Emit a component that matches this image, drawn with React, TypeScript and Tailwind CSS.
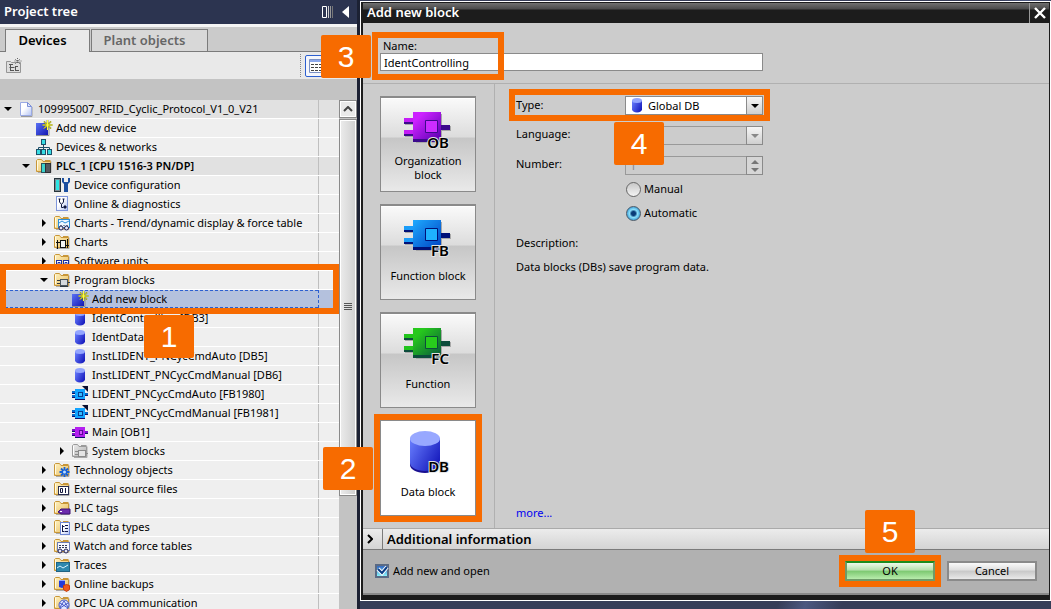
import type { ReactNode } from 'react';

type IconName =
  | 'page' | 'newItem' | 'network' | 'plc' | 'config' | 'diagnostics' | 'trend' | 'charts'
  | 'units' | 'blocks' | 'db' | 'fb' | 'ob' | 'system' | 'tech' | 'external' | 'tags'
  | 'types' | 'watch' | 'traces' | 'backups' | 'opc';

type TreeNode = {
  label: string;
  depth: number;
  icon: IconName;
  state?: 'open' | 'closed';
  header?: boolean;
  bold?: boolean;
  selected?: boolean;
};

const nodes: TreeNode[] = [
  { label: '109995007_RFID_Cyclic_Protocol_V1_0_V21', depth: 0, icon: 'page', state: 'open', header: true },
  { label: 'Add new device', depth: 1, icon: 'newItem' },
  { label: 'Devices & networks', depth: 1, icon: 'network' },
  { label: 'PLC_1 [CPU 1516-3 PN/DP]', depth: 1, icon: 'plc', state: 'open', header: true, bold: true },
  { label: 'Device configuration', depth: 2, icon: 'config' },
  { label: 'Online & diagnostics', depth: 2, icon: 'diagnostics' },
  { label: 'Charts - Trend/dynamic display & force table', depth: 2, icon: 'trend', state: 'closed' },
  { label: 'Charts', depth: 2, icon: 'charts', state: 'closed' },
  { label: 'Software units', depth: 2, icon: 'units', state: 'closed' },
  { label: 'Program blocks', depth: 2, icon: 'blocks', state: 'open' },
  { label: 'Add new block', depth: 3, icon: 'newItem', selected: true },
  { label: 'IdentControlling [DB3]', depth: 3, icon: 'db' },
  { label: 'IdentData [DB4]', depth: 3, icon: 'db' },
  { label: 'InstLIDENT_PNCycCmdAuto [DB5]', depth: 3, icon: 'db' },
  { label: 'InstLIDENT_PNCycCmdManual [DB6]', depth: 3, icon: 'db' },
  { label: 'LIDENT_PNCycCmdAuto [FB1980]', depth: 3, icon: 'fb' },
  { label: 'LIDENT_PNCycCmdManual [FB1981]', depth: 3, icon: 'fb' },
  { label: 'Main [OB1]', depth: 3, icon: 'ob' },
  { label: 'System blocks', depth: 3, icon: 'system', state: 'closed' },
  { label: 'Technology objects', depth: 2, icon: 'tech', state: 'closed' },
  { label: 'External source files', depth: 2, icon: 'external', state: 'closed' },
  { label: 'PLC tags', depth: 2, icon: 'tags', state: 'closed' },
  { label: 'PLC data types', depth: 2, icon: 'types', state: 'closed' },
  { label: 'Watch and force tables', depth: 2, icon: 'watch', state: 'closed' },
  { label: 'Traces', depth: 2, icon: 'traces', state: 'closed' },
  { label: 'Online backups', depth: 2, icon: 'backups', state: 'closed' },
  { label: 'OPC UA communication', depth: 2, icon: 'opc', state: 'closed' },
];

const indent = ['pl-0', 'pl-[18px]', 'pl-[36px]', 'pl-[54px]'];

function Gradients() {
  return (
    <svg className="absolute size-0" aria-hidden="true">
      <defs>
        <linearGradient id="folder" x1="0" y1="0" x2="1" y2="1">
          <stop offset="0" stopColor="#fff2c0" />
          <stop offset="1" stopColor="#e8bd62" />
        </linearGradient>
        <linearGradient id="grayFolder" x1="0" y1="0" x2="1" y2="1">
          <stop offset="0" stopColor="#ececec" />
          <stop offset="1" stopColor="#b0b0b0" />
        </linearGradient>
        <linearGradient id="blue" x1="0" y1="0" x2="1" y2="1">
          <stop offset="0" stopColor="#5a72f4" />
          <stop offset="1" stopColor="#1418b4" />
        </linearGradient>
        <linearGradient id="cylinder" x1="0" y1="0" x2="1" y2="0.6">
          <stop offset="0" stopColor="#6a80ff" />
          <stop offset="1" stopColor="#1a1fc0" />
        </linearGradient>
        <linearGradient id="paper" x1="0" y1="0" x2="1" y2="1">
          <stop offset="0.4" stopColor="#ffffff" />
          <stop offset="1" stopColor="#b4c4f4" />
        </linearGradient>
        <linearGradient id="purpleBlock" x1="0" y1="0" x2="1" y2="1">
          <stop offset="0.2" stopColor="#cc22ff" />
          <stop offset="1" stopColor="#5a00b0" />
        </linearGradient>
        <linearGradient id="blueBlock" x1="0" y1="0" x2="1" y2="1">
          <stop offset="0" stopColor="#1eaaff" />
          <stop offset="1" stopColor="#0044c4" />
        </linearGradient>
        <linearGradient id="greenBlock" x1="0" y1="0" x2="1" y2="1">
          <stop offset="0.2" stopColor="#26c81c" />
          <stop offset="1" stopColor="#0a5a3c" />
        </linearGradient>
      </defs>
    </svg>
  );
}

function Folder({ gray }: { gray?: boolean }) {
  return (
    <g>
      <path d="M2 14.5h13V3.5" fill="none" stroke="#a9a9a9" />
      <path
        d="M.5 13.5v-11l1-1h4l1.500 2h7.500v10z"
        fill={gray ? 'url(#grayFolder)' : 'url(#folder)'}
        stroke={gray ? '#9a9a9a' : '#c89638'}
      />
      <path d="M1.500 12V3" stroke={gray ? '#fff' : '#fffbe6'} />
      <path d="M9 2.500h5.500" stroke={gray ? '#9a9a9a' : '#c89638'} />
    </g>
  );
}

function Chip({ color, pin }: { color: string; pin: string }) {
  return (
    <g>
      <path d="M0 5h4v2H0zM0 9h4v2H0zM12 7h4v2h-4z" fill={pin} />
      <path d="M0 7.500h3M0 11.500h3M13 9.500h3" stroke="#10106c" />
      <path d="M3 3h10v10H3z" fill={color} />
      <path d="M3 13.500h10" stroke="#10106c" />
    </g>
  );
}

const drawings: Record<IconName, ReactNode> = {
  page: (
    <g>
      <path d="M3 15.500h11V6" fill="none" stroke="#9a9a9a" />
      <path d="M2.500 1.500h7l4 4v9h-11z" fill="url(#paper)" stroke="#9aaae4" />
      <path d="M9.500 1.500v4h4z" fill="#dfe6fc" stroke="#7c90d8" />
    </g>
  ),
  newItem: (
    <g>
      <path d="M0 3h12v12H0z" fill="url(#blue)" />
      <path d="M0 15.500h13V5" fill="none" stroke="#8f8f8f" />
      <path d="M11.500 0v10M6.500 5h10M8 1.500l7 7M15 1.500l-7 7" stroke="#6a6a18" strokeWidth="1.600" />
      <path d="M11.500 0v10M6.500 5h10M8 1.500l7 7M15 1.500l-7 7" stroke="#ffff3c" />
    </g>
  ),
  network: (
    <g fill="#38dce4" stroke="#1e5068">
      <path d="M7.500 6v3M2.500 10V8.500h11V10M7.500 8v2" fill="none" />
      <rect x="5.500" y=".5" width="4" height="5" />
      <rect x=".5" y="10.500" width="4" height="5" />
      <rect x="5.500" y="10.500" width="4" height="5" />
      <rect x="11.500" y="10.500" width="4" height="5" />
    </g>
  ),
  plc: (
    <g>
      <Folder />
      <rect x="5.500" y="5.500" width="4" height="9" fill="#3cd2cc" stroke="#2b5560" />
      <rect x="9.500" y="5.500" width="5" height="9" fill="#55595f" stroke="#2e3034" />
    </g>
  ),
  config: (
    <g>
      <rect x=".5" y="1.500" width="6" height="13" fill="#7c8890" stroke="#26343c" />
      <path d="M2 3h3v10H2z" fill="#2ce6e4" />
      <path d="M8 1v4l2 2v8h4V7l2-2V1h-2v4h-4V1z" fill="#1b4fa0" />
    </g>
  ),
  diagnostics: (
    <g>
      <rect x="2.500" y=".5" width="11" height="14" fill="url(#paper)" stroke="#7f96dc" />
      <path d="M5.500 3v3l2 2.500 2-2.500V3M7.500 8.500v3h2" fill="none" stroke="#101840" />
      <path d="M10 10h2v2h-2zM4.500 3h2M8.500 3h2" fill="#101840" stroke="#101840" />
    </g>
  ),
  trend: (
    <g>
      <Folder />
      <rect x="4.500" y="4.500" width="11" height="8" fill="#eef6ff" stroke="#2c8fd8" />
      <path d="M5 8l3-2 3 2 4-2" fill="none" stroke="#2c8fd8" />
      <path d="M6 10.500h8" stroke="#8090a0" strokeDasharray="2 1" />
      <circle cx="7" cy="13" r="2" fill="#e8e8f8" stroke="#202050" />
      <circle cx="12.500" cy="13" r="2" fill="#e8e8f8" stroke="#202050" />
    </g>
  ),
  charts: (
    <g>
      <Folder />
      <rect x="6.500" y="6.500" width="5" height="7" fill="#f4f4f4" stroke="#101010" />
      <path d="M2 8.500h4M3.500 6v9M12 11.500h3M13.500 5v9" fill="none" stroke="#101010" />
    </g>
  ),
  units: (
    <g>
      <Folder />
      <rect x="2.500" y="7.500" width="5" height="6" fill="#fff" stroke="#2030a0" />
      <rect x="9.500" y="7.500" width="5" height="6" fill="#fff" stroke="#2030a0" />
      <path d="M4 9.500h2v2H4zM11 9.500h2v2h-2z" fill="none" stroke="#2030a0" />
    </g>
  ),
  blocks: (
    <g>
      <Folder />
      <path d="M3 8.500h4M3 11.500h4M12 10.500h4" stroke="#2f3840" strokeWidth="1" />
      <rect x="6.500" y="7.500" width="7" height="6" fill="#d4d8dc" stroke="#4a545c" />
      <path d="M6 14.500h8" stroke="#2f3840" />
    </g>
  ),
  db: (
    <g>
      <path d="M3 3.500v9c0 1.500 2 3 5 3s5-1.500 5-3v-9z" fill="url(#cylinder)" />
      <ellipse cx="8" cy="3.500" rx="5" ry="2.500" fill="#93a5ff" />
    </g>
  ),
  fb: (
    <g>
      <Chip color="#12a4ff" pin="#0668c8" />
      <rect x="6.500" y="6.500" width="4" height="4" fill="#35bcff" stroke="#083c90" />
      <path d="M10 0h6v6z" fill="#0b0f30" />
    </g>
  ),
  ob: (
    <g>
      <Chip color="#b31ff0" pin="#7a10c8" />
      <rect x="7.500" y="6.500" width="3" height="4" fill="#d650ff" stroke="#5a0a98" />
    </g>
  ),
  system: (
    <g>
      <Folder gray />
      <path d="M3 8.500h4M3 11.500h4M12 10.500h4" stroke="#8a8a8a" />
      <rect x="6.500" y="7.500" width="7" height="6" fill="#e4e4e4" stroke="#8a8a8a" />
    </g>
  ),
  tech: (
    <g>
      <Folder />
      <path d="M10.500 5v10M5.500 10h10M7 6.500l7 7M14 6.500l-7 7" stroke="#1862d8" strokeWidth="1.800" />
      <circle cx="10.500" cy="10" r="1.500" fill="#bfe0ff" />
    </g>
  ),
  external: (
    <g>
      <Folder />
      <rect x="4.500" y="5.500" width="10" height="8" fill="#fff" stroke="#2a2e50" />
      <path d="M6.500 7.500h2v4h-2zM11.500 7v5" fill="none" stroke="#14183c" />
    </g>
  ),
  tags: (
    <g>
      <Folder />
      <path d="M4 12l3-3h9v5H7z" fill="#6d2cae" stroke="#3d1272" />
      <path d="M6 11.500h2" stroke="#fff" />
    </g>
  ),
  types: (
    <g>
      <Folder />
      <rect x="6.500" y="3.500" width="9" height="12" fill="url(#paper)" stroke="#6d86d4" />
      <path d="M8.500 6v7M8.500 7.500h2M8.500 12.500h2M11 6.500h3M11 9.500h3M11 12.500h3" stroke="#10184c" />
    </g>
  ),
  watch: (
    <g>
      <Folder />
      <rect x="3.500" y="4.500" width="12" height="8" fill="#f6f8ff" stroke="#6a7cb8" />
      <path d="M5 7.500h9M5 9.500h9" stroke="#303a58" strokeDasharray="2 1" />
      <circle cx="6" cy="13" r="2" fill="#e8e8f8" stroke="#202050" />
      <circle cx="12" cy="13" r="2" fill="#e8e8f8" stroke="#202050" />
    </g>
  ),
  traces: (
    <g>
      <Folder />
      <rect x="2.500" y="5.500" width="13" height="9" fill="#2d88ae" stroke="#1f6384" />
      <path d="M3 11l3-2 3 2 5-3" fill="none" stroke="#d6f2ff" />
    </g>
  ),
  backups: (
    <g>
      <Folder />
      <path d="M5 4h6v7l-3 1-3-1z" fill="#243cd8" />
      <path d="M5 4h6v1H5z" fill="#93a5ff" />
      <path d="M9.500 9.500l3-1 3 1v4l-3 2-3-2z" fill="#f05a1c" stroke="#c83c08" />
    </g>
  ),
  opc: (
    <g>
      <Folder />
      <circle cx="10" cy="10" r="5" fill="#dfe6ff" stroke="#4457c8" />
      <path d="M6 12l4-6 4 6M6 8l8 5M14 8l-8 5" fill="none" stroke="#4457c8" />
    </g>
  ),
};

function Icon({ name }: { name: IconName }) {
  return (
    <svg viewBox="0 0 16 16" className="size-4 shrink-0 overflow-visible" aria-hidden="true">
      {drawings[name]}
    </svg>
  );
}

// Orange frame with its step number, laid over the control it points to
function Callout({ step, frame, badge }: { step: number; frame: string; badge: string }) {
  return (
    <div className={`pointer-events-none absolute z-10 border-6 border-[#f76b00] ${frame}`}>
      <span
        className={`absolute flex h-[43px] w-[50px] items-center justify-center rounded-xs bg-[#f76b00] font-['Liberation_Sans',sans-serif] text-[30px] leading-none text-white ${badge}`}
      >
        {step}
      </span>
    </div>
  );
}

function Arrow({ node }: { node: TreeNode }) {
  if (!node.state) return <span className="w-4 shrink-0" />;
  return (
    <button type="button" aria-label={`Toggle ${node.label}`} className="flex w-4 shrink-0 items-center justify-center">
      <svg viewBox="0 0 8 8" className="size-2" aria-hidden="true">
        <path d={node.state === 'open' ? 'M0 2h8l-4 4z' : 'M2 0l4 4-4 4z'} />
      </svg>
    </button>
  );
}

function TreeRow({ node }: { node: TreeNode }) {
  const color = node.selected ? 'bg-[#b4c1dd]' : node.header ? 'bg-[#e1e1e1]' : 'bg-[#efefef]';
  return (
    <li className={`relative flex h-[19px] border-b border-white ${color}`}>
      <div
        className={`flex min-w-0 flex-1 items-center ${indent[node.depth]} ${
          node.selected ? 'border-y border-dashed border-[#2c5fd0]' : ''
        }`}
      >
        <Arrow node={node} />
        <span className="ml-0.5 mr-1 flex">
          <Icon name={node.icon} />
        </span>
        <span className={`whitespace-nowrap ${node.bold ? 'font-semibold' : ''}`}>{node.label}</span>
      </div>
      <div className={`w-[21px] border-l ${node.selected ? 'border-dashed border-[#2c5fd0]' : 'border-[#bfbfbf]'}`} />
      {node.selected && <Callout step={1} frame="inset-x-0 -top-[26px] h-[50px]" badge="left-[138px] top-[45px]" />}
    </li>
  );
}

function ProjectTree() {
  return (
    <aside className="flex w-[357px] shrink-0 flex-col bg-[#c3c3c3]">
      <header className="flex h-6 shrink-0 items-center bg-[#2c3450] pl-1 pr-[7px] text-white">
        <h2 className="flex-1 text-[13px] font-semibold">Project tree</h2>
        <button type="button" aria-label="Pin" className="mr-2">
          <svg viewBox="0 0 12 12" className="size-3" aria-hidden="true">
            <path d="M.5.5h4v11h-4z" fill="none" stroke="#fff" />
            <path d="M6.500 0v12" stroke="#ccc" />
            <path d="M8.500 0v12" stroke="#999" />
            <path d="M10.500 0v12" stroke="#777" />
          </svg>
        </button>
        <button type="button" aria-label="Collapse">
          <svg viewBox="0 0 8 12" className="h-3 w-2" aria-hidden="true">
            <path d="M7 0v12L0 6z" fill="#fff" />
          </svg>
        </button>
      </header>
      <div className="mt-[3px] flex h-[25px] shrink-0 items-end border-b border-[#7b7b7b] bg-[#cbcbcb] pl-[5px] shadow-[0_-3px_0_#f4f4f4]">
        <button
          type="button"
          className="-mb-px h-[23px] w-[85px] border border-b-0 border-[#7b7b7b] bg-[#e9e9e9] pr-2.5 text-[13px] font-semibold"
        >
          Devices
        </button>
        <button
          type="button"
          className="ml-px h-[22px] w-[117px] border border-b-0 border-[#7b7b7b] bg-[#d8d8d8] pr-2.5 text-[13px] font-semibold text-[#666]"
        >
          Plant objects
        </button>
      </div>
      <div className="flex h-[27px] shrink-0 items-center bg-[#e9e9e9] pl-1.5">
        <button type="button" aria-label="Add object">
          <svg viewBox="0 0 16 16" className="size-4" aria-hidden="true">
            <path d="M.5 14.500v-11h4l1 1h9v10z" fill="#dedede" stroke="#969696" />
            <path d="M3 6.500h4M3.500 9.500h5M4.500 7v6M4 12.500h4M9.500 8v5M9 8.500h3M10 12.500h3" stroke="#555" />
            <path d="M11.500 0v6M8.500 3h7M9 1l5 5M14 1L9 6" stroke="#666" strokeDasharray="1 1" />
          </svg>
        </button>
        <span className="ml-auto h-[23px] border-l border-dotted border-[#888]" />
        <button
          type="button"
          aria-label="Details view"
          className="ml-1 mr-5 h-[22px] w-8 rounded-xs border border-[#2c5fd0] bg-[#f4f6fc] pl-[3px]"
        >
          <svg viewBox="0 0 16 14" className="h-3.5 w-4" aria-hidden="true">
            <path d="M.5.5h15v13H.5z" fill="#fff" stroke="#7a90c4" />
            <path d="M1 2h14" stroke="#8ca8ec" strokeWidth="2" />
            <path d="M2 5.500h12M2 8.500h12M2 11.500h12" stroke="#444" strokeDasharray="3 1" />
          </svg>
        </button>
      </div>
      <div className="mt-[21px] flex min-h-0 flex-1">
        <ul className="flex-1 self-start text-[11px] leading-4">
          {nodes.map((node) => (
            <TreeRow key={node.label} node={node} />
          ))}
        </ul>
        <div className="flex w-[18px] flex-col">
          <button
            type="button"
            aria-label="Scroll up"
            className="flex h-[18px] shrink-0 items-center justify-center border border-[#8a8a8a] bg-[#e9e9e9] shadow-[inset_0_0_0_1px_#fff]"
          >
            <svg viewBox="0 0 10 6" className="h-1.5 w-2.5" aria-hidden="true">
              <path d="M1 5l4-4 4 4" fill="none" stroke="#444" strokeWidth="2" />
            </svg>
          </button>
          <div className="mt-px flex h-[74%] items-center justify-center border border-[#8a8a8a] bg-linear-to-r from-[#ececec] to-[#cfcfcf] shadow-[inset_0_0_0_1px_#fff]">
            <svg viewBox="0 0 8 8" className="size-2" aria-hidden="true">
              <path d="M0 .5h8M0 2.500h8M0 4.500h8M0 6.500h8" stroke="#555" />
            </svg>
          </div>
        </div>
      </div>
    </aside>
  );
}

function CodeText({ code, y }: { code: string; y: number }) {
  return (
    <text
      x="45"
      y={y}
      textAnchor="end"
      fontSize="15"
      fontWeight="600"
      stroke="#e4e4e4"
      strokeWidth="2"
      paintOrder="stroke"
    >
      {code}
    </text>
  );
}

function BlockArt({ fill, pin, shade, core, code }: { fill: string; pin: string; shade: string; core: string; code: string }) {
  return (
    <svg viewBox="0 0 48 40" className="h-10 w-12" aria-hidden="true">
      <path d="M1 8h10v5H1zM1 20h10v5H1zM38 14h9v5h-9zM12 2h26v29H12z" fill="#a8a8a8" />
      <path d="M0 6h10v4H0zM0 18h10v4H0z" fill={pin} />
      <path d="M0 10h10v2H0zM0 22h10v2H0zM36 13h10v5H36zM9 27h28v3H9z" fill={shade} />
      <path d="M9 0h28v27H9z" fill={fill} />
      <path d="M21.500 8.500h12v12h-12z" fill={core} stroke={shade} />
      <CodeText code={code} y={36} />
    </svg>
  );
}

const blockTypes = [
  {
    label: 'Organization block',
    art: <BlockArt fill="url(#purpleBlock)" pin="#c41cf6" shade="#3c0a8c" core="#cc2cff" code="OB" />,
  },
  {
    label: 'Function block',
    art: <BlockArt fill="url(#blueBlock)" pin="#1a9cf8" shade="#001078" core="#1eb2ff" code="FB" />,
  },
  {
    label: 'Function',
    art: <BlockArt fill="url(#greenBlock)" pin="#22c41c" shade="#0c4c3c" core="#28cc1c" code="FC" />,
  },
  {
    label: 'Data block',
    selected: true,
    art: (
      <svg viewBox="0 0 48 44" className="h-11 w-12" aria-hidden="true">
        <path d="M6 9v25c0 4 6 8 15 8s15-4 15-8V9z" fill="#1a1090" />
        <path d="M6 7v25c0 4 6 8 15 8s15-4 15-8V7z" fill="url(#cylinder)" />
        <ellipse cx="21" cy="7.500" rx="15" ry="7.500" fill="#98a8ff" />
        <CodeText code="DB" y={41} />
      </svg>
    ),
  },
];

function BlockButtons() {
  return (
    <div className="flex w-[132px] shrink-0 flex-col gap-3 border-r border-[#b0b0b0] pl-[17px] pt-3">
      {blockTypes.map((block) => (
        <div key={block.label} className="relative size-24">
          <button
            type="button"
            aria-pressed={!!block.selected}
            className={`flex size-full flex-col items-center border border-[#8a8a8a] px-2 pt-3.5 text-[11px] leading-3.5 ${
              block.selected
                ? 'bg-white'
                : 'border-t-2 bg-[linear-gradient(#fafafa,#dcdcdc_42%,#c6c6c6_43%,#e9e9e9)] shadow-[inset_0_1px_0_#fff]'
            }`}
          >
            <span className={block.selected ? '-mt-1 h-[45px]' : 'h-10'}>{block.art}</span>
            <span className="flex h-8 items-center">{block.label}</span>
          </button>
          {block.selected && <Callout step={2} frame="-inset-1.5" badge="-left-[57px] top-[27px]" />}
        </div>
      ))}
    </div>
  );
}

function DropArrow({ muted }: { muted?: boolean }) {
  return (
    <span className="pointer-events-none absolute inset-y-0 right-0 flex w-[17px] items-center justify-center border border-[#8a8a8a] bg-linear-to-b from-[#f6f6f6] to-[#cfcfcf]">
      <svg viewBox="0 0 8 4" className="h-1 w-2" aria-hidden="true">
        <path d="M0 0h8L4 4z" fill={muted ? '#888' : '#000'} />
      </svg>
    </span>
  );
}

function BlockSettings() {
  return (
    <div className="flex flex-1 flex-col pl-[21px] pt-3">
      <div className="flex flex-col gap-[11px]">
        <div className="relative flex h-[19px]">
          <label htmlFor="type" className="w-[109px] leading-[18px]">Type:</label>
          <div className="relative h-full w-[138px]">
            <select id="type" className="size-full appearance-none border border-[#8a8a8a] bg-white pl-[22px] leading-4">
              <option>Global DB</option>
            </select>
            <span className="pointer-events-none absolute left-1 top-px">
              <Icon name="db" />
            </span>
            <DropArrow />
          </div>
          <Callout step={4} frame="-left-[7px] -top-[7px] h-8 w-[261px]" badge="left-[99px] top-[27px]" />
        </div>
        <div className="flex h-[19px]">
          <label htmlFor="language" className="w-[109px]">Language:</label>
          <div className="relative h-full w-[138px]">
            <select id="language" disabled className="size-full appearance-none border border-[#999] pl-1 leading-4">
              <option>DB</option>
            </select>
            <DropArrow muted />
          </div>
        </div>
        <div className="flex h-[19px]">
          <label htmlFor="number" className="w-[109px]">Number:</label>
          <div className="relative h-full w-[138px]">
            <input id="number" disabled defaultValue="1" className="size-full border border-[#999] pl-1 text-[#888]" />
            <span className="absolute inset-y-0 right-0 flex w-[17px] items-center justify-center border border-[#8a8a8a] bg-[#d6d6d6]">
              <svg viewBox="0 0 8 12" className="h-3 w-2" aria-hidden="true">
                <path d="M0 4h8L4 0zM0 8h8l-4 4z" fill="#777" />
              </svg>
            </span>
          </div>
        </div>
      </div>
      <fieldset className="ml-[110px] mt-0.5">
        <label className="flex h-6 items-center gap-[3px]">
          <input
            type="radio"
            name="numbering"
            className="size-[15px] appearance-none rounded-full border border-[#666] bg-linear-to-b from-[#c8c8c8] to-[#f4f4f4]"
          />
          Manual
        </label>
        <label className="flex h-6 items-center gap-[3px]">
          <input
            type="radio"
            name="numbering"
            defaultChecked
            className="size-[15px] appearance-none rounded-full border border-[#4a5a68] bg-[radial-gradient(circle,#0a3c78_0_2px,#8ce0fa_4px,#3a9cd8_7px)]"
          />
          Automatic
        </label>
      </fieldset>
      <p className="mt-2.5">Description:</p>
      <p className="mt-2">Data blocks (DBs) save program data.</p>
      <a href="#more" className="mb-[7px] mt-auto self-start text-[#0000f0]">more...</a>
    </div>
  );
}

function AddBlockDialog() {
  return (
    <section
      role="dialog"
      aria-labelledby="dialog-title"
      className="flex min-h-0 flex-1 flex-col border-l-2 border-r border-t border-[#1c1c1c] bg-[#ccc] text-[11px] leading-4 outline outline-white"
    >
      <header className="flex h-5 shrink-0 bg-[linear-gradient(#707070,#4a4a4a_6px,#1c1c1c_7px)] text-white">
        <h2 id="dialog-title" className="flex-1 pl-1 text-[13px] leading-[18px] font-semibold">Add new block</h2>
        <button type="button" aria-label="Close" className="flex w-5 items-center justify-center border-l border-[#999]">
          <svg viewBox="0 0 12 12" className="size-3" aria-hidden="true">
            <path d="M1 1l10 10M11 1L1 11" stroke="#fff" strokeWidth="2.400" />
          </svg>
        </button>
      </header>
      <div className="relative flex h-[61px] shrink-0 flex-col border-b border-[#b0b0b0] pl-[17px] pt-[15px]">
        <label htmlFor="name" className="pl-[3px] leading-[15px]">Name:</label>
        <input
          id="name"
          defaultValue="IdentControlling"
          className="h-[18px] w-[383px] border border-[#8a8a8a] bg-white pl-[3px]"
        />
        <Callout step={3} frame="left-[9px] top-[9px] h-12 w-[132px]" badge="-left-[57px] -top-[3px]" />
      </div>
      <div className="flex min-h-0 flex-1">
        <BlockButtons />
        <BlockSettings />
      </div>
      <div className="flex h-[22px] shrink-0 border-b border-t border-b-[#7b7b7b] border-t-[#aaa] bg-linear-to-b from-[#ececec] to-[#d4d4d4]">
        <button type="button" aria-label="Expand" className="flex w-5 items-center justify-center border-r border-[#7b7b7b] pr-1.5">
          <svg viewBox="0 0 6 10" className="h-2.5 w-1.5" aria-hidden="true">
            <path d="M1 1l4 4-4 4" fill="none" stroke="#000" strokeWidth="2" />
          </svg>
        </button>
        <h3 className="pl-1 text-[13px] leading-5 font-semibold">Additional information</h3>
      </div>
      <footer className="flex h-[45px] shrink-0 items-start gap-3 border-b-2 border-[#8a8a8a] bg-[#b1b1b1] pl-3 pr-3 pt-[11px]">
        <label className="relative mr-auto flex h-5 items-center gap-1">
          <input
            type="checkbox"
            defaultChecked
            className="size-3.5 appearance-none border-2 border-[#5a6a84] bg-linear-to-b from-[#3468c0] to-[#8cf4fc]"
          />
          <svg viewBox="0 0 14 14" className="pointer-events-none absolute left-0 size-3.5" aria-hidden="true">
            <path d="M3 5l4 4 5-6" fill="none" stroke="#fff" strokeWidth="4" />
            <path d="M3 5l4 4 5-6" fill="none" stroke="#0a3c84" strokeWidth="2" />
          </svg>
          Add new and open
        </label>
        <div className="relative">
          <button
            type="button"
            className="h-5 w-[90px] border-2 border-[#6f9a68] border-t-[#1c8c1c] bg-[linear-gradient(#eefaea,#b4e0ac_45%,#7cc870_50%,#b8ecac)] leading-4"
          >
            OK
          </button>
          <Callout step={5} frame="-left-1.5 -top-1.5 h-8 w-[102px]" badge="left-5 -top-[51px]" />
        </div>
        <button
          type="button"
          className="h-5 w-[90px] border-2 border-[#8a8a8a] bg-[linear-gradient(#fafafa,#dedede_45%,#c8c8c8_50%,#e9e9e9)] leading-4"
        >
          Cancel
        </button>
      </footer>
      <div className="h-[5px] shrink-0 bg-[#1c1c1c]" />
    </section>
  );
}

export default function App() {
  return (
    <div className="flex h-screen overflow-hidden bg-[#1c2133] font-['Noto_Sans','Open_Sans',sans-serif] text-black">
      <Gradients />
      <ProjectTree />
      <main className="flex min-w-0 flex-1 flex-col bg-[linear-gradient(110deg,#363d58_70%,#4c5880_73%,#363d58_77%)] pb-[9px] pl-1 pr-px pt-0.5 shadow-[inset_3px_0_0_#1c2133]">
        <AddBlockDialog />
      </main>
    </div>
  );
}
